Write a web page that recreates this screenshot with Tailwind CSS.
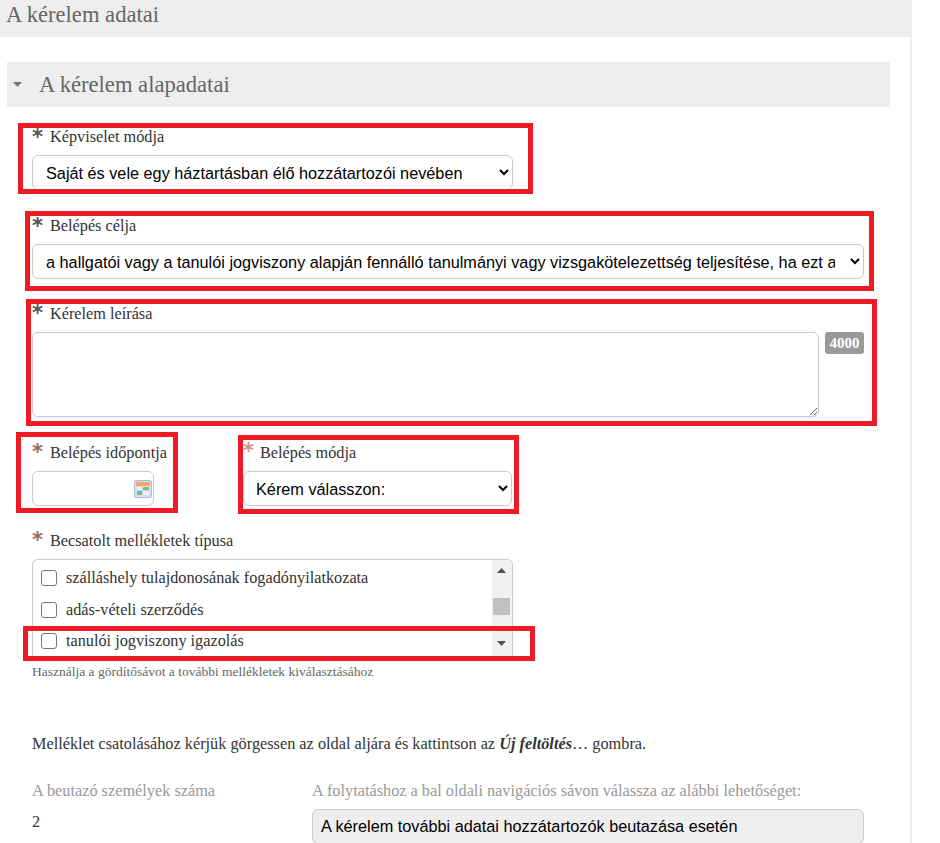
<!DOCTYPE html>
<html lang="hu">
<head>
    <meta charset="UTF-8">
    <meta name="viewport" content="width=device-width, initial-scale=1.0">
    <title>A kérelem adatai</title>
    <script src="https://cdn.jsdelivr.net/npm/@tailwindcss/browser@4"></script>
</head>
<body class="bg-white overflow-hidden font-['Liberation_Serif',serif]">
<div class="relative h-[843px] w-[940px] overflow-hidden">
    <div class="w-[912px] h-[843px] border-r-2 border-[#f0f0f0]">
        <div class="h-[37px] bg-[#eeeeee] pl-[6px] text-[22.6px] leading-[30px] text-[#666666]">A kérelem adatai</div>

        <div class="mt-[25px] ml-[7px] w-[883px] h-[45px] bg-[#eeeeee] flex items-center text-[#666666]">
            <svg class="ml-[6px] w-[9px] h-[5px]" viewBox="0 0 9 5"><path d="M0 0h9L4.500 5z" fill="#777777"/></svg>
            <span class="ml-[17px] text-[22.6px]">A kérelem alapadatai</span>
        </div>

        <div class="pl-[32px] pt-[20px]">
            <label class="flex h-[19px] pt-[2px] items-center text-[16.25px] text-[#333333]"><span class="w-[18px] h-[19px] text-[21px] leading-[19px] font-bold font-['DejaVu_Sans',sans-serif] text-[#555555]">*</span>Képviselet módja</label>
            <select class="mt-[9px] block w-[481px] h-[35px] rounded-[6px] border border-[#cccccc] bg-white pl-[9px] pr-[12px] text-[16.25px] text-black font-['Liberation_Sans',sans-serif]">
                <option>Saját és vele egy háztartásban élő hozzátartozói nevében</option>
            </select>

            <label class="mt-[26px] flex h-[19px] pt-[2px] items-center text-[16.25px] text-[#333333]"><span class="w-[18px] h-[19px] text-[21px] leading-[19px] font-bold font-['DejaVu_Sans',sans-serif] text-[#555555]">*</span>Belépés célja</label>
            <select class="mt-[9px] block w-[832px] h-[35px] rounded-[6px] border border-[#cccccc] bg-white pl-[9px] pr-[12px] text-[16.25px] text-black font-['Liberation_Sans',sans-serif]">
                <option>a hallgatói vagy a tanulói jogviszony alapján fennálló tanulmányi vagy vizsgakötelezettség teljesítése, ha ezt a beutazás indokolja</option>
            </select>

            <label class="mt-[24px] flex h-[19px] pt-[4px] items-center text-[16.25px] text-[#333333]"><span class="w-[18px] h-[19px] text-[21px] leading-[17px] font-bold font-['DejaVu_Sans',sans-serif] text-[#555555]">*</span>Kérelem leírása</label>
            <div class="mt-[10px] flex items-start">
                <textarea class="block w-[787px] h-[85px] rounded-[6px] border border-[#cccccc] bg-white resize-y"></textarea>
                <span class="ml-[6px] w-[39px] h-[22px] rounded-[3px] bg-[#999999] text-white text-[15px] font-bold leading-[22px] text-center">4000</span>
            </div>

            <div class="mt-[25px] flex">
                <div class="w-[211px]">
                    <label class="flex h-[19px] pt-[4px] items-center text-[16.25px] text-[#333333] whitespace-nowrap"><span class="w-[18px] h-[19px] text-[21px] leading-[17px] font-bold font-['DejaVu_Sans',sans-serif] text-[#a56666]">*</span>Belépés időpontja</label>
                    <div class="mt-[10px] w-[122px] h-[35px] rounded-[6px] border border-[#cccccc] bg-white flex items-center justify-end pr-[1px]">
                        <svg class="w-[18px] h-[18px]" viewBox="0 0 18 18">
                            <rect x="0.500" y="0.500" width="17" height="17" rx="1.500" fill="#d5e1f0" stroke="#a9bedd"/>
                            <rect x="2" y="2" width="14" height="4" fill="#f0a868"/>
                            <rect x="3" y="7" width="12" height="8" fill="#c9d6e4"/>
                            <rect x="3" y="7" width="5" height="3" fill="#eef2f6"/>
                            <rect x="9" y="7" width="6" height="3" fill="#7fb88a"/>
                            <rect x="3" y="11" width="5" height="4" fill="#7fb88a"/>
                            <rect x="9" y="11" width="6" height="4" fill="#eef2f6"/>
                        </svg>
                    </div>
                </div>
                <div>
                    <label class="flex h-[19px] pt-[4px] items-center text-[16.25px] text-[#333333]"><span class="w-[17px] h-[19px] text-[21px] leading-[15px] font-bold font-['DejaVu_Sans',sans-serif] text-[#d09090]">*</span>Belépés módja</label>
                    <select class="mt-[10px] block w-[269px] h-[35px] rounded-[6px] border border-[#cccccc] bg-white pl-[8px] pr-[12px] text-[16.25px] text-black font-['Liberation_Sans',sans-serif]">
                        <option>Kérem válasszon:</option>
                    </select>
                </div>
            </div>

            <label class="mt-[24px] flex h-[19px] pt-[4px] items-center text-[16.25px] text-[#333333]"><span class="w-[18px] h-[19px] text-[21px] leading-[17px] font-bold font-['DejaVu_Sans',sans-serif] text-[#a56666]">*</span>Becsatolt mellékletek típusa</label>
            <div class="mt-[10px] flex w-[481px] h-[97px] rounded-t-[6px] border border-b-0 border-[#cccccc] overflow-hidden">
                <ul class="flex-1 pl-[8px] pt-[2px] text-[16.25px] text-[#333333]">
                    <li class="flex h-[32px] items-center"><span class="w-[16px] h-[16px] rounded-[3px] border border-[#767676] bg-white"></span><span class="ml-[9px]">szálláshely tulajdonosának fogadónyilatkozata</span></li>
                    <li class="flex h-[32px] items-center"><span class="w-[16px] h-[16px] rounded-[3px] border border-[#767676] bg-white"></span><span class="ml-[9px]">adás-vételi szerződés</span></li>
                    <li class="flex h-[30px] items-center"><span class="w-[16px] h-[16px] rounded-[3px] border border-[#767676] bg-white"></span><span class="ml-[9px]">tanulói jogviszony igazolás</span></li>
                </ul>
                <div class="w-[20px] bg-[#f1f1f1] flex flex-col items-start">
                    <svg class="mt-[8px] ml-[5px] w-[9px] h-[5px]" viewBox="0 0 9 5"><path d="M4.500 0L9 5H0z" fill="#505050"/></svg>
                    <div class="mt-[25px] ml-[1px] w-[17px] h-[17px] bg-[#c1c1c1]"></div>
                    <svg class="mt-[26px] ml-[5px] w-[9px] h-[5px]" viewBox="0 0 9 5"><path d="M0 0h9L4.500 5z" fill="#505050"/></svg>
                </div>
            </div>
            <p class="mt-[8px] text-[13.5px] leading-[16px] text-[#666666] whitespace-nowrap">Használja a gördítősávot a további mellékletek kiválasztásához</p>

            <p class="mt-[54px] text-[16.3px] leading-[20px] text-[#333333] whitespace-nowrap">Melléklet csatolásához kérjük görgessen az oldal aljára és kattintson az <b class="italic">Új feltöltés</b>… gombra.</p>

            <div class="mt-[27px] flex">
                <div class="w-[280px] text-[16.3px]">
                    <div class="h-[20px] leading-[20px] text-[#999999]">A beutazó személyek száma</div>
                    <div class="mt-[11px] leading-[20px] text-[#333333]">2</div>
                </div>
                <div>
                    <div class="h-[20px] text-[16.3px] leading-[20px] text-[#999999] whitespace-nowrap">A folytatáshoz a bal oldali navigációs sávon válassza az alábbi lehetőséget:</div>
                    <div class="mt-[8px] w-[552px] h-[35px] rounded-[6px] border border-[#cccccc] bg-[#eeeeee] pl-[8px] text-[16.25px] leading-[33px] text-black font-['Liberation_Sans',sans-serif]">A kérelem további adatai hozzátartozók beutazása esetén</div>
                </div>
            </div>
        </div>
    </div>

    <!-- red annotation frames drawn over the form -->
    <div class="absolute left-[18px] top-[123px] w-[515px] h-[71px] border-[5px] border-[#ed1c24]"></div>
    <div class="absolute left-[25px] top-[211px] w-[849px] h-[80px] border-[5px] border-[#ed1c24]"></div>
    <div class="absolute left-[26px] top-[299px] w-[851px] h-[127px] border-[5px] border-[#ed1c24]"></div>
    <div class="absolute left-[16px] top-[432px] w-[162px] h-[81px] border-[5px] border-[#ed1c24]"></div>
    <div class="absolute left-[238px] top-[435px] w-[281px] h-[79px] border-[5px] border-[#ed1c24]"></div>
    <div class="absolute left-[23px] top-[626px] w-[512px] h-[35px] border-[5px] border-[#ed1c24]"></div>
</div>
</body>
</html>
